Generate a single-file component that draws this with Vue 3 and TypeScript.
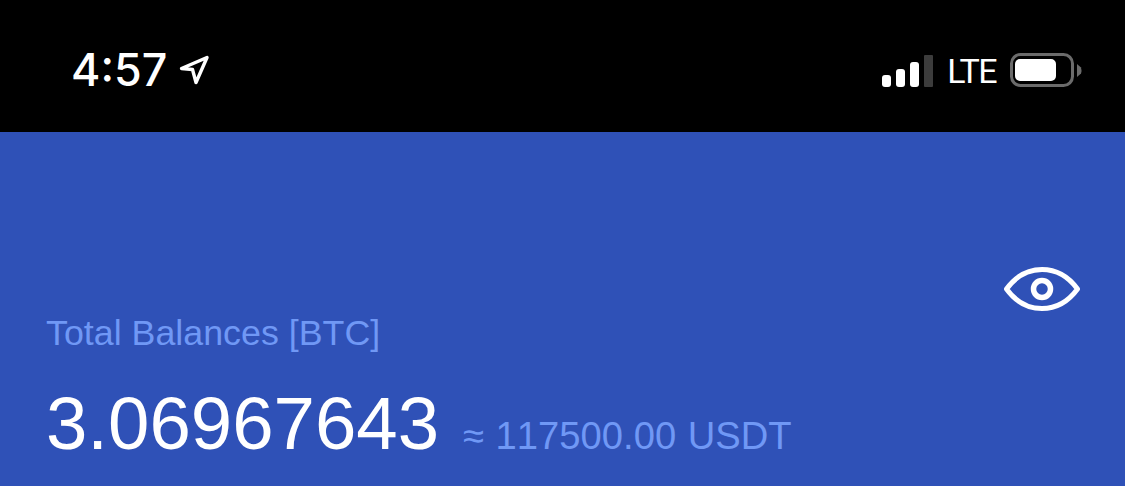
<template>
  <div class="screen">
    <header class="status">
      <div class="status-left">
        <span class="time">4:57</span>
        <svg class="arrow" width="30" height="30" viewBox="0 0 30 30" fill="none">
          <path d="M2.500 13.500 L28 2.500 L17 27.500 L13.500 14.500 Z" stroke="#fff" stroke-width="3.400" stroke-linejoin="round" />
        </svg>
      </div>
      <div class="status-right">
        <div class="signal">
          <i v-for="bar in bars" :key="bar.h" :class="{ off: bar.off }" :style="{ height: bar.h + 'px' }" />
        </div>
        <span class="lte">LTE</span>
        <svg class="battery" width="72" height="36" viewBox="0 0 72 36" fill="none">
          <rect x="1.500" y="1.500" width="61" height="31" rx="9" stroke="#6b6b6b" stroke-width="3" />
          <rect x="5" y="6" width="41" height="22" rx="5" fill="#fff" />
          <path d="M67 11 L71 14.500 Q72 17.500 71 20.500 L67 24 Z" fill="#6b6b6b" />
        </svg>
      </div>
    </header>

    <section class="balance">
      <div class="label-row">
        <span class="label">Total Balances [BTC]</span>
        <svg class="eye" width="78" height="48" viewBox="0 0 78 48" fill="none">
          <path d="M3.500 24 C13 11 25 4.500 39 4.500 C53 4.500 65 11 74.500 24 C65 37 53 43.500 39 43.500 C25 43.500 13 37 3.500 24 Z" stroke="#fff" stroke-width="5" stroke-linejoin="round" />
          <circle cx="39" cy="24" r="8.500" stroke="#fff" stroke-width="5.500" />
        </svg>
      </div>
      <div class="amount-row">
        <span class="amount">3.06967643</span>
        <span class="approx">≈ 117500.00 USDT</span>
      </div>
    </section>
  </div>
</template>

<script setup lang="ts">
const bars = [
  { h: 12, off: false },
  { h: 18, off: false },
  { h: 25, off: false },
  { h: 32, off: true },
];
</script>

<style>
html,
body {
  margin: 0;
  background: #2f51b7;
}
</style>

<style scoped>
.screen {
  width: 1125px;
  height: 486px;
  overflow: hidden;
  display: flex;
  flex-direction: column;
  font-family: "Liberation Sans", Arial, sans-serif;
}

.status {
  height: 132px;
  box-sizing: border-box;
  flex: none;
  background: #000;
  color: #fff;
  display: flex;
  justify-content: space-between;
  align-items: center;
  padding: 9px 43px 0 71px;
}

.status-left {
  display: flex;
  align-items: center;
  gap: 12px;
}

.time {
  font-family: Inter, sans-serif;
  font-size: 44.800px;
  font-weight: 550;
  line-height: 1;
}

.status-right {
  display: flex;
  align-items: center;
  gap: 14px;
}

.signal {
  display: flex;
  align-items: flex-end;
  gap: 5px;
}

.signal i {
  display: block;
  width: 9px;
  background: #fff;
  border-radius: 3px;
}

.signal i.off {
  background: #3c3c3c;
  border-radius: 1px;
}

.lte {
  font-family: Roboto, sans-serif;
  font-size: 34px;
  font-weight: 400;
  line-height: 1;
  letter-spacing: -1.500px;
}

.balance {
  flex: 1;
  background: #2f51b7;
  padding: 0 44px 0 46px;
  display: flex;
  flex-direction: column;
}

.label-row {
  display: flex;
  justify-content: space-between;
  align-items: flex-end;
  margin-top: 133px;
}

.label {
  font-size: 35.800px;
  line-height: 40px;
  color: #7098f5;
}

.eye {
  margin-bottom: 40px;
}

.amount-row {
  display: flex;
  align-items: baseline;
  gap: 24px;
  margin-top: 29px;
}

.amount {
  font-size: 74.400px;
  line-height: 84px;
  color: #fff;
}

.approx {
  font-size: 38.200px;
  font-kerning: none;
  word-spacing: 1px;
  color: #7098f5;
}
</style>
